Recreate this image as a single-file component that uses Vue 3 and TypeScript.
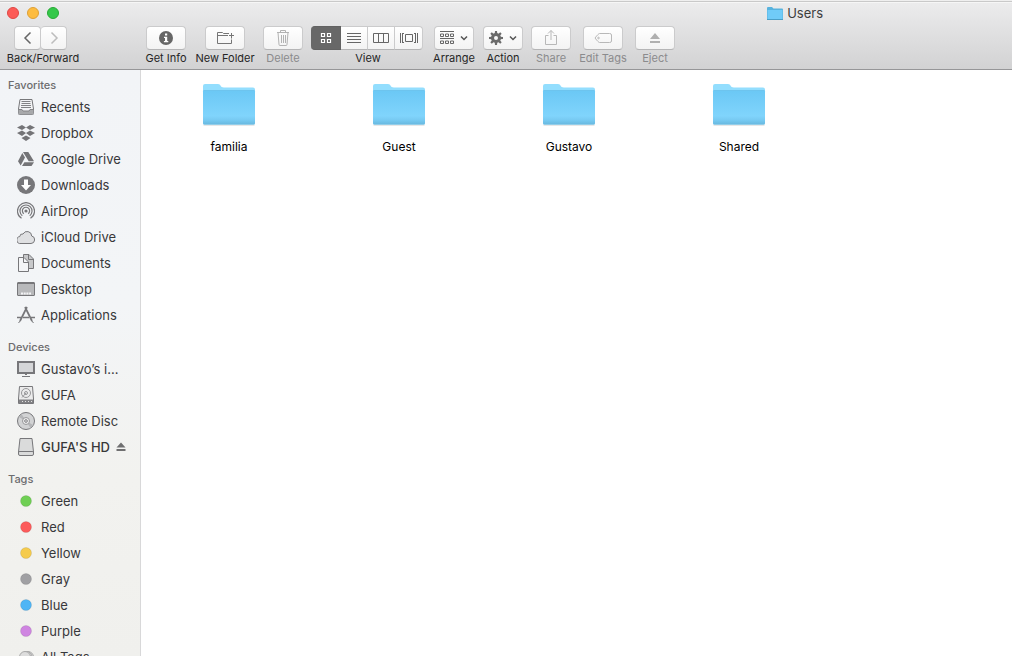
<script setup lang="ts">
import { ref } from 'vue'

interface Entry { id: string; label: string; color?: string; eject?: boolean; strong?: boolean }
interface Section { title: string; items: Entry[] }
interface Tool { id: string; label: string; width: string; disabled?: boolean }

const sections: Section[] = [
  {
    title: 'Favorites',
    items: [
      { id: 'recents', label: 'Recents' },
      { id: 'dropbox', label: 'Dropbox' },
      { id: 'gdrive', label: 'Google Drive' },
      { id: 'downloads', label: 'Downloads' },
      { id: 'airdrop', label: 'AirDrop' },
      { id: 'icloud', label: 'iCloud Drive' },
      { id: 'documents', label: 'Documents' },
      { id: 'desktop', label: 'Desktop' },
      { id: 'applications', label: 'Applications' },
    ],
  },
  {
    title: 'Devices',
    items: [
      { id: 'imac', label: 'Gustavo’s i…' },
      { id: 'drive', label: 'GUFA' },
      { id: 'disc', label: 'Remote Disc' },
      { id: 'external', label: "GUFA'S HD", eject: true, strong: true },
    ],
  },
  {
    title: 'Tags',
    items: [
      { id: 'tag', label: 'Green', color: '#6fcf54' },
      { id: 'tag', label: 'Red', color: '#fc5b5b' },
      { id: 'tag', label: 'Yellow', color: '#f5cb4c' },
      { id: 'tag', label: 'Gray', color: '#a0a0a3' },
      { id: 'tag', label: 'Blue', color: '#4fb5f5' },
      { id: 'tag', label: 'Purple', color: '#cf85e1' },
      { id: 'alltags', label: 'All Tags…' },
    ],
  },
]

const fileTools: Tool[] = [
  { id: 'info', label: 'Get Info', width: 'w42' },
  { id: 'new', label: 'New Folder', width: 'w60' },
  { id: 'delete', label: 'Delete', width: 'w40', disabled: true },
]
const actionTools: Tool[] = [
  { id: 'arrange', label: 'Arrange', width: 'w42' },
  { id: 'action', label: 'Action', width: 'w40' },
  { id: 'share', label: 'Share', width: 'w40', disabled: true },
  { id: 'tags', label: 'Edit Tags', width: 'w48', disabled: true },
  { id: 'eject', label: 'Eject', width: 'w40', disabled: true },
]
const views = ['Icons', 'List', 'Columns', 'Cover Flow']
const view = ref('Icons')
const folders = ['familia', 'Guest', 'Gustavo', 'Shared']
const teeth = [0, 45, 90, 135, 180, 225, 270, 315]
</script>

<template>
  <div class="window">
    <header class="chrome">
      <div class="titlebar">
        <div class="lights">
          <button class="light red" aria-label="Close"></button>
          <button class="light amber" aria-label="Minimize"></button>
          <button class="light green" aria-label="Zoom"></button>
        </div>
        <h1 class="title">
          <svg width="16" height="15" viewBox="0 0 16 15" aria-hidden="true">
            <path d="M0 2Q0 1 1 1H5L6.500 2.500H15Q16 2.500 16 3.500V14H0Z" fill="#58b3de" />
            <rect x="0.500" y="4" width="15" height="9.500" fill="#70cbf8" />
            <path d="M0 13.500H16" stroke="#4b9ec6" />
          </svg>
          Users
        </h1>
      </div>

      <div class="toolbar" role="toolbar" aria-label="Finder toolbar">
        <div class="tool nav">
          <div class="group">
            <button class="btn back" aria-label="Back">
              <svg width="12" height="14" viewBox="0 0 12 14"><path d="M8.500 1.500L3 7L8.500 12.500" fill="none" stroke="#666" stroke-width="1.500" /></svg>
            </button>
            <button class="btn forward" aria-label="Forward" disabled>
              <svg width="12" height="14" viewBox="0 0 12 14"><path d="M3.500 1.500L9 7L3.500 12.500" fill="none" stroke="#bdbdbd" stroke-width="1.500" /></svg>
            </button>
          </div>
          <span class="caption">Back/Forward</span>
        </div>

        <div v-for="t in fileTools" :key="t.id" class="tool" :class="[t.width, { off: t.disabled }]">
          <button class="btn" :aria-label="t.label" :disabled="t.disabled">
            <svg v-if="t.id === 'info'" width="16" height="16" viewBox="0 0 16 16">
              <circle cx="8" cy="8" r="7" fill="#666" />
              <path d="M7 3.500H9.200V5.500H7ZM6 6.700H9.200V11H10.300V12.200H5.900V11H7V7.900H6Z" fill="#fff" />
            </svg>
            <svg v-else-if="t.id === 'new'" width="20" height="16" viewBox="0 0 20 16" fill="none" stroke="#757575">
              <path d="M14 3.500H8.500L7.500 2.500H2.500V13.500H16.500V9.500M2.500 5.500H13M16.500 3V8.500M14 5.500H19" />
            </svg>
            <svg v-else width="16" height="18" viewBox="0 0 16 18" fill="none" stroke="#b3b3b3">
              <path d="M2 3.500H14M5.500 3.500V1.500H10.500V3.500M3 3.500L4 15.500Q4 16.500 5 16.500H11Q12 16.500 12 15.500L13 3.500M6.500 6V14M8.500 6V14M10.500 6V14" />
            </svg>
          </button>
          <span class="caption">{{ t.label }}</span>
        </div>

        <div class="tool viewtool">
          <div class="group">
            <button v-for="v in views" :key="v" class="btn seg" :class="{ on: view === v }" :aria-label="v" :aria-pressed="view === v" @click="view = v">
              <svg v-if="v === 'Icons'" width="12" height="12" viewBox="0 0 12 12" fill="none" stroke="currentColor">
                <path d="M1.500 1.500H4.500V4.500H1.500ZM7.500 1.500H10.500V4.500H7.500ZM1.500 7.500H4.500V10.500H1.500ZM7.500 7.500H10.500V10.500H7.500Z" stroke-width="1.200" />
              </svg>
              <svg v-else-if="v === 'List'" width="14" height="12" viewBox="0 0 14 12" stroke="currentColor">
                <path d="M0 1.500H14M0 4.500H14M0 7.500H14M0 10.500H14" />
              </svg>
              <svg v-else-if="v === 'Columns'" width="16" height="12" viewBox="0 0 16 12" fill="none" stroke="currentColor">
                <path d="M.5 1.500H15.500V10.500H.5ZM5.500 1.500V10.500M10.500 1.500V10.500" />
              </svg>
              <svg v-else width="18" height="12" viewBox="0 0 18 12" fill="none" stroke="currentColor">
                <path d="M.5 1V11M17.500 1V11M2.500 1V11M15.500 1V11M2.500 1.500H4M2.500 10.500H4M15.500 1.500H14M15.500 10.500H14M5.500 2.500H12.500V9.500H5.500Z" />
              </svg>
            </button>
          </div>
          <span class="caption">View</span>
        </div>

        <div v-for="t in actionTools" :key="t.id" class="tool" :class="[t.width, { off: t.disabled }]">
          <button class="btn" :aria-label="t.label" :disabled="t.disabled">
            <svg v-if="t.id === 'arrange'" width="28" height="16" viewBox="0 0 28 16" fill="none" stroke="#666">
              <path d="M0 1.500H14M0 8.500H14M.5 4H3.500V6.500H.5ZM5.500 4H8.500V6.500H5.500ZM10.500 4H13.500V6.500H10.500ZM.5 11H3.500V13.500H.5ZM5.500 11H8.500V13.500H5.500ZM10.500 11H13.500V13.500H10.500Z" />
              <path d="M21 6.500L24 9.500L27 6.500" stroke="#555" stroke-width="1.500" />
            </svg>
            <svg v-else-if="t.id === 'action'" width="28" height="16" viewBox="0 0 28 16" fill="none">
              <circle cx="7" cy="8" r="3.500" stroke="#6b6b6b" stroke-width="3" />
              <path v-for="a in teeth" :key="a" d="M5.700 4L6 1H8L8.300 4Z" fill="#6b6b6b" :transform="`rotate(${a} 7 8)`" />
              <path d="M21 6.500L24 9.500L27 6.500" stroke="#555" stroke-width="1.500" />
            </svg>
            <svg v-else-if="t.id === 'share'" width="14" height="18" viewBox="0 0 14 18" fill="none" stroke="#b8b8b8">
              <path d="M4.500 6.500H1.500V15.500H12.500V6.500H9.500M7 11V1.500M4 4.500L7 1.500L10 4.500" />
            </svg>
            <svg v-else-if="t.id === 'tags'" width="18" height="12" viewBox="0 0 18 12" fill="none" stroke="#b8b8b8">
              <path d="M5.500 1.500H15.500Q17.500 1.500 17.500 3V9Q17.500 10.500 15.500 10.500H5.500Q4.500 10.500 1 6Q4.500 1.500 5.500 1.500Z" />
              <circle cx="4.500" cy="6" r="0.800" />
            </svg>
            <svg v-else width="12" height="12" viewBox="0 0 12 12" fill="#b0b0b0"><path d="M6 1L11 7H1ZM1 9H11V11H1Z" /></svg>
          </button>
          <span class="caption">{{ t.label }}</span>
        </div>
      </div>
    </header>

    <div class="content">
      <nav class="sidebar" aria-label="Sidebar">
        <section v-for="s in sections" :key="s.title" class="section">
          <h2 class="heading">{{ s.title }}</h2>
          <ul class="list">
            <li v-for="e in s.items" :key="e.label" class="row">
              <a class="link" :class="{ strong: e.strong }" href="#">
                <svg class="icon" width="18" height="18" viewBox="0 0 18 18" fill="none" stroke="#77777a" aria-hidden="true">
                  <template v-if="e.id === 'recents'">
                    <path d="M3 1.500H15L16.500 11V15.500Q16.500 16.500 15.500 16.500H2.500Q1.500 16.500 1.500 15.500V11Z" fill="#f3f4f6" />
                    <path d="M1.500 11.500H5L6 13H12L13 11.500H16.500V16.500H1.500Z" fill="#a8a9ab" stroke="none" />
                    <path d="M4.500 3.500H13.500M4.500 5.500H13.500M4 7.500H14M4 9.500H14M1.500 11.500H5L6 13H12L13 11.500H16.500" stroke="#838386" />
                  </template>
                  <path v-else-if="e.id === 'dropbox'" d="M5 1L9 3.500L5 6L0 3.500ZM13 1L18 3.500L13 6L9 3.500ZM5 6.500L9 9L5 12L0 9ZM13 6.500L18 9L13 12L9 9ZM9 11.500L13.500 14L9 17L4.500 14Z" fill="#747477" stroke="none" />
                  <path v-else-if="e.id === 'gdrive'" d="M6 2H11.300L17 11.300H11.700ZM5.300 3L8 7.600L3.700 15.500L1 11.300ZM7.400 12.300H17L14.500 16H5Z" fill="#747477" stroke="none" />
                  <template v-else-if="e.id === 'downloads'">
                    <circle cx="9" cy="9" r="9" fill="#77777a" stroke="none" />
                    <path d="M7 3.500H11V9H14L9 14.500L4 9H7Z" fill="#fff" stroke="none" />
                  </template>
                  <template v-else-if="e.id === 'airdrop'">
                    <path d="M4.500 16.300A8.500 8.500 0 1 1 13.500 16.300M5.300 13.700A6 6 0 1 1 12.700 13.700M6.800 11.700A3.600 3.600 0 1 1 11.200 11.700" stroke-width="1.200" />
                    <circle cx="9" cy="9" r="1.600" fill="#77777a" stroke="none" />
                  </template>
                  <path v-else-if="e.id === 'icloud'" d="M4 15.500A3.500 3.500 0 0 1 2.800 8.500A2.700 2.700 0 0 1 6 6A4.600 4.600 0 0 1 14.700 8A3.800 3.800 0 0 1 14 15.500Z" fill="#dfe0e2" />
                  <template v-else-if="e.id === 'documents'">
                    <path d="M6.500 .5H12L16.500 5V14.500H6.500Z" fill="#c7c8ca" /><path d="M11.500 .5V5.500H16.500" />
                    <path d="M1.500 3.500H7L11.500 8V17.500H1.500Z" fill="#f3f4f6" /><path d="M6.500 3.500V8.500H11.500" />
                  </template>
                  <template v-else-if="e.id === 'desktop'">
                    <rect x=".5" y="2.500" width="17" height="13" rx=".5" fill="#b8b9bb" /><path d="M0 3.500H18" />
                    <path d="M4 13.500H14" stroke="#f3f4f6" stroke-width="2" stroke-dasharray="2 .7" />
                  </template>
                  <template v-else-if="e.id === 'applications'">
                    <path d="M10 1L3 15M8 1L15 15" stroke-width="1.700" /><path d="M0 11.500H4M6 11.500H12M14 11.500H18" stroke-width="1.700" /><path d="M1.500 17L3.500 14.500M16.500 17L14.500 14.500" />
                  </template>
                  <template v-else-if="e.id === 'imac'">
                    <rect x="1" y="2" width="16" height="11" fill="#d5d6d8" stroke-width="2" /><path d="M8 13H10V15H8Z" fill="#77777a" stroke="none" /><path d="M5 16.500H13" />
                  </template>
                  <template v-else-if="e.id === 'drive'">
                    <path d="M2.500 .5H15.500L16.500 13V17.500H1.500V13Z" fill="#ececec" /><circle cx="9" cy="7" r="4.500" stroke="#98989a" /><circle cx="9" cy="7" r="1.500" stroke="#98989a" /><path d="M9 7L5 11.500" stroke="#98989a" />
                    <path d="M2 13.500H16V17H2Z" fill="#828285" stroke="none" /><path d="M5 15.500H16" stroke="#e3e3e3" stroke-dasharray="1 2" />
                  </template>
                  <template v-else-if="e.id === 'disc'">
                    <circle cx="9" cy="9" r="8.500" fill="#d2d3d4" /><path d="M9 9L1.800 5L4.500 2ZM9 9L16.200 13L13.500 16Z" fill="#b5b6b8" stroke="none" /><circle cx="9" cy="9" r="3.500" fill="#eee" stroke="#98989a" /><circle cx="9" cy="9" r="1.300" fill="#fff" />
                  </template>
                  <template v-else-if="e.id === 'external'">
                    <path d="M3 .5H15L16.500 14V16Q16.500 17.500 15 17.500H3Q1.500 17.500 1.500 16V14Z" fill="#dadbdb" /><path d="M1.500 14.500Q1.500 13.500 3 13.500H15Q16.500 13.500 16.500 14.500" />
                  </template>
                  <circle v-else-if="e.id === 'tag'" cx="9" cy="9" r="5.500" :fill="e.color" stroke="#00000018" />
                  <template v-else>
                    <circle cx="11" cy="9" r="5.500" fill="#ddd" stroke="#aaa" /><circle cx="9.500" cy="9" r="5.500" fill="#ddd" stroke="#aaa" /><circle cx="8" cy="9" r="5.500" fill="#ddd" stroke="#aaa" />
                  </template>
                </svg>
                <span class="name">{{ e.label }}</span>
              </a>
              <button v-if="e.eject" class="eject" :aria-label="`Eject ${e.label}`">
                <svg width="10" height="10" viewBox="0 0 10 10" fill="#6f6f70"><path d="M5 .5L9.500 5.500H.5ZM.5 7H9.500V9H.5Z" /></svg>
              </button>
            </li>
          </ul>
        </section>
      </nav>

      <main class="files">
        <a v-for="f in folders" :key="f" class="folder" href="#">
          <svg width="54" height="46" viewBox="0 0 54 46" aria-hidden="true">
            <defs>
              <linearGradient id="front" x1="0" y1="0" x2="0" y2="1">
                <stop offset="0" stop-color="#6bc8f5" /><stop offset=".75" stop-color="#80d4fc" /><stop offset=".88" stop-color="#76c9f1" /><stop offset="1" stop-color="#68b8df" />
              </linearGradient>
            </defs>
            <path d="M1.500 43H52.500" stroke="#00000018" stroke-width="2" />
            <path d="M1 4Q1 2 3 2H16C19 2 18 5.500 22 5.500H51Q53 5.500 53 7.500V41Q53 42.500 51.500 42.500H2.500Q1 42.500 1 41Z" fill="#93defe" />
            <path d="M1 9.500Q1 8.500 2 8.500H52Q53 8.500 53 9.500V41Q53 42.500 51.500 42.500H2.500Q1 42.500 1 41Z" fill="url(#front)" />
            <path d="M1.500 8.500H52.500" stroke="#62bae6" stroke-width=".6" />
          </svg>
          <span>{{ f }}</span>
        </a>
      </main>
    </div>
  </div>
</template>

<style>
body { margin: 0; background: #f0f0f0; }
</style>

<style scoped>
* { box-sizing: border-box; }
.window {
  display: flex;
  flex-direction: column;
  height: 100vh;
  overflow: hidden;
  border-top: 1px solid #efefef;
  font-family: Inter, "Liberation Sans", sans-serif;
  color: #333;
}
.chrome {
  flex: none;
  border-top: 1px solid #c9c9c9;
  border-bottom: 1px solid #969698;
  background: linear-gradient(#ececed, #d2d2d3);
  box-shadow: inset 0 1px #f6f6f6;
}
.titlebar { display: flex; align-items: center; height: 24px; padding: 0 189px 2px 7px; }
.lights { display: flex; gap: 8px; }
.light { width: 12px; height: 12px; padding: 0; border: 1px solid; border-radius: 50%; }
.red { background: #fc5b57; border-color: #e04744; }
.amber { background: #fdbc40; border-color: #dfa035; }
.green { background: #34c84a; border-color: #27aa35; }
.title { display: flex; align-items: center; gap: 4px; margin: 0 0 0 auto; font-size: 13px; font-weight: 400; line-height: 16px; color: #3d3d3d; }
.toolbar { display: flex; gap: 8px; padding: 0 7px 3px; }
.tool { display: flex; flex: none; flex-direction: column; align-items: center; color: #262626; }
.caption { font-size: 11px; line-height: 16px; white-space: nowrap; }
.off { color: #8b8b8d; }
.nav { width: 72px; margin-right: 58px; }
.nav .group { align-self: flex-start; padding-left: 7px; }
.viewtool { width: 114px; }
.viewtool .group { align-self: flex-start; }
.w40 { width: 40px; }
.w42 { width: 42px; }
.w48 { width: 48px; }
.w60 { width: 60px; }
.group { display: flex; }
.btn {
  display: flex;
  align-items: center;
  justify-content: center;
  width: 40px;
  height: 24px;
  padding: 0;
  border: 1px solid #cbcbcc;
  border-bottom-color: #b5b5b6;
  border-radius: 4px;
  background: linear-gradient(#fff, #f3f3f3);
  color: #666;
}
.back, .forward { width: 27px; }
.forward { width: 26px; border-left: 0; }
.seg { width: 27px; border-left-width: 0; border-radius: 0; }
.seg:first-child { width: 30px; border-radius: 4px 0 0 4px; }
.seg:last-child { width: 28px; border-radius: 0 4px 4px 0; }
.seg.on { border-color: #626262; background: #686868; color: #fff; }
.content { display: flex; flex: 1; min-height: 0; }
.sidebar {
  flex: none;
  width: 141px;
  padding-top: 6px;
  overflow: hidden;
  border-right: 1px solid #d8d8d9;
  background: linear-gradient(#f2f4f7, #f3f5f7 40%, #f2f2ef 70%, #f0f0ed);
}
.section { margin-bottom: 10px; }
.heading { margin: 0; padding-left: 8px; font-size: 11px; font-weight: 500; line-height: 18px; color: #6c6c6e; }
.list { margin: 0; padding: 0; list-style: none; }
.row { display: flex; align-items: center; height: 26px; padding-left: 17px; }
.link { display: flex; align-items: center; gap: 6px; color: #38383a; font-size: 13px; line-height: 18px; white-space: nowrap; text-decoration: none; }
.strong { font-weight: 500; }
.icon { flex: none; }
.eject { display: flex; margin-left: 6px; padding: 0; border: 0; background: none; }
.files {
  display: grid;
  flex: 1;
  grid-template-columns: repeat(auto-fill, 170px);
  align-content: start;
  padding: 12px 0 0 3px;
  background: #fff;
}
.folder { display: flex; flex-direction: column; align-items: center; gap: 11px; color: #000; font-size: 12px; line-height: 16px; text-decoration: none; }
</style>
